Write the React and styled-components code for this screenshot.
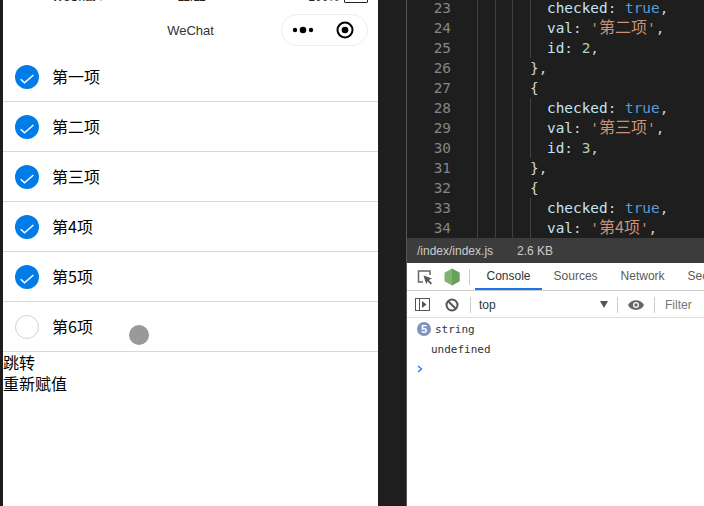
import React from 'react';
import styled, { createGlobalStyle } from 'styled-components';

const GlobalStyle = createGlobalStyle`
  html, body {
    margin: 0;
    padding: 0;
    background: #1e1e1e;
  }
`;

const CJK = '"Noto Sans CJK SC", sans-serif';
const MONO = '"DejaVu Sans Mono", "Noto Sans CJK SC", monospace';

const Page = styled.div`
  width: 704px;
  height: 506px;
  display: flex;
  overflow: hidden;
  background: #1e1e1e;
  padding-left: 3px;
  box-sizing: border-box;
`;

const Simulator = styled.div`
  position: relative;
  width: 375px;
  height: 506px;
  flex: none;
  background: #fff;
  color: #000;
  font-family: ${CJK};
  font-size: 16px;
`;

const StatusBar = styled.div`
  height: 8px;
  overflow: hidden;
  display: grid;
  grid-template-columns: 1fr auto 1fr;
  padding: 0 10px 0 12px;
  font-family: "Liberation Sans", sans-serif;
  font-size: 12px;
  line-height: 14px;
  color: #222;
`;

const StatusGroup = styled.div`
  display: flex;
  gap: 5px;
  margin-top: -10px;
  justify-content: ${(p) => (p.$end ? 'flex-end' : 'flex-start')};
`;

const Signal = styled.span`
  color: #888;
  letter-spacing: 2.2px;
`;

const Battery = styled.div`
  width: 22px;
  height: 11px;
  border: 1px solid #222;
  border-radius: 1px;
`;

const NavBar = styled.div`
  height: 44px;
  display: grid;
  grid-template-columns: 1fr auto 1fr;
  align-items: center;
  font-family: "Liberation Sans", sans-serif;
  font-size: 13px;
  color: #333;
`;

const NavTitle = styled.span`
  grid-column: 2;
`;

const Capsule = styled.div`
  grid-column: 3;
  justify-self: end;
  margin-right: 10px;
  width: 87px;
  height: 32px;
  box-sizing: border-box;
  border: 1px solid #ececec;
  border-radius: 16px;
  display: flex;
  align-items: center;
  padding-left: 10px;
`;

const Row = styled.div`
  height: 50px;
  box-sizing: border-box;
  border-bottom: 1px solid #d9d9d9;
  display: flex;
  align-items: center;
  gap: 13px;
  padding: 0 0 1px 12px;
`;

const Check = styled.span`
  width: 24px;
  height: 24px;
  box-sizing: border-box;
  flex: none;
  margin-top: 1px;
  border-radius: 50%;
  display: flex;
  align-items: center;
  justify-content: center;
  background: ${(p) => (p.$on ? '#007ce8' : '#fff')};
  border: ${(p) => (p.$on ? 'none' : '1px solid #d1d1d1')};
`;

const Plain = styled.div`
  line-height: 21px;
`;

const TouchDot = styled.div`
  position: absolute;
  left: 126px;
  top: 325px;
  width: 20px;
  height: 20px;
  border-radius: 50%;
  background: #999;
`;

const Right = styled.div`
  flex: 1;
  min-width: 0;
  margin-left: 28px;
  border-left: 1px solid #555;
  display: flex;
  flex-direction: column;
`;

const Editor = styled.div`
  height: 238px;
  flex: none;
  overflow: hidden;
  background-color: #1e1e1e;
  background-image:
    linear-gradient(#404040, #404040),
    linear-gradient(#404040, #404040),
    linear-gradient(#404040, #404040);
  background-size: 1px 100%;
  background-repeat: no-repeat;
  background-position: 70px 0, 88px 0, 105px 0;
`;

const CodeLines = styled.div`
  margin-top: -2px;
`;

const CodeLine = styled.div`
  height: 20px;
  display: flex;
  font-family: ${MONO};
  font-size: 14.4px;
  line-height: 20px;
  white-space: pre;
`;

const LineNo = styled.span`
  width: 44px;
  flex: none;
  text-align: right;
  color: #858585;
`;

const CodeText = styled.span`
  margin-left: 79px;
  padding-left: ${(p) => (p.$deep ? '17px' : '0')};
  color: #d4d4d4;
  background: ${(p) =>
    p.$deep ? 'linear-gradient(#404040, #404040) 0 0 / 1px 100% no-repeat' : 'none'};
`;

const Keyword = styled.span`
  color: #569cd6;
`;

const Str = styled.span`
  color: #ce9178;
`;

const Zh = styled.span`
  font-family: ${CJK};
  font-size: 16px;
  line-height: 1;
`;

const Num = styled.span`
  color: #b5cea8;
`;

const Prop = styled.span`
  color: #c4e4f2;
`;

const Strip = styled.div`
  height: 25px;
  flex: none;
  background: #3c3c3c;
  color: #ccc;
  display: flex;
  align-items: center;
  gap: 24px;
  padding-left: 10px;
  font-family: "Liberation Sans", sans-serif;
  font-size: 12px;
`;

const DevTools = styled.div`
  flex: 1;
  background: #fff;
  display: flex;
  flex-direction: column;
  font-family: "Liberation Sans", sans-serif;
  font-size: 12px;
  color: #5a5a5a;
`;

const TabBar = styled.div`
  height: 28px;
  flex: none;
  box-sizing: border-box;
  border-bottom: 1px solid #ccc;
  display: flex;
  align-items: center;
  padding-left: 10px;
  overflow: hidden;

  svg {
    flex: none;
  }
`;

const Divider = styled.span`
  width: 1px;
  height: 16px;
  flex: none;
  background: #ccc;
  margin: ${(p) => p.$margin};
`;

const Tab = styled.span`
  height: 27px;
  box-sizing: border-box;
  padding: 0 11.5px;
  display: flex;
  align-items: center;
  flex: none;
  color: ${(p) => (p.$active ? '#333' : '#5a5a5a')};
  border-bottom: 2px solid ${(p) => (p.$active ? '#1a73e8' : 'transparent')};
`;

const FilterBar = styled.div`
  height: 27px;
  flex: none;
  box-sizing: border-box;
  border-bottom: 1px solid #ddd;
  display: flex;
  align-items: center;
  padding: 1px 0 0 8px;

  svg {
    flex: none;
  }
`;

const TopSelect = styled.span`
  width: 129px;
  flex: none;
  margin-left: 8px;
  display: flex;
  justify-content: space-between;
  align-items: center;
  color: #333;
`;

const FilterLabel = styled.span`
  margin-left: 10px;
  color: #777;
`;

const ConsoleBody = styled.div`
  padding: 1px 0 0 10px;
  font-family: "DejaVu Sans Mono", monospace;
  font-size: 11px;
  color: #333;
`;

const LogLine = styled.div`
  height: 20px;
  display: flex;
  align-items: center;
  gap: 4px;
  padding-left: ${(p) => (p.$indent ? '14px' : '0')};
`;

const Badge = styled.span`
  width: 14px;
  height: 14px;
  border-radius: 50%;
  background: #7f93c0;
  color: #fff;
  font-family: "Liberation Sans", sans-serif;
  font-weight: bold;
  font-size: 11px;
  display: flex;
  align-items: center;
  justify-content: center;
`;

const items = [
  { id: 1, val: '第一项', checked: true },
  { id: 2, val: '第二项', checked: true },
  { id: 3, val: '第三项', checked: true },
  { id: 4, val: '第4项', checked: true },
  { id: 5, val: '第5项', checked: true },
  { id: 6, val: '第6项', checked: false },
];

const Checked = () => (
  <>
    <Prop>checked</Prop>: <Keyword>true</Keyword>,
  </>
);
const Val = ({ text }) => (
  <>
    <Prop>val</Prop>: <Str>'<Zh>{text}</Zh>'</Str>,
  </>
);
const Id = ({ n }) => (
  <>
    <Prop>id</Prop>: <Num>{n}</Num>,
  </>
);

const code = [
  [23, <Checked />, true],
  [24, <Val text="第二项" />, true],
  [25, <Id n={2} />, true],
  [26, '},', false],
  [27, '{', false],
  [28, <Checked />, true],
  [29, <Val text="第三项" />, true],
  [30, <Id n={3} />, true],
  [31, '},', false],
  [32, '{', false],
  [33, <Checked />, true],
  [34, <Val text="第4项" />, true],
];

const Tick = () => (
  <svg width="14" height="10" viewBox="0 0 14 10" style={{ marginTop: 5 }} fill="none">
    <path d="M0.7 5.2 L4.6 8.8 L13.4 1" stroke="#fff" strokeWidth="1.5" />
  </svg>
);

const MenuDots = () => (
  <svg width="24" height="10" viewBox="0 0 24 10">
    <circle cx="3" cy="5" r="2.2" fill="#000" />
    <circle cx="11" cy="5" r="3.3" fill="#000" />
    <circle cx="19" cy="5" r="2.2" fill="#000" />
  </svg>
);

const CloseRing = () => (
  <svg width="18" height="18" viewBox="0 0 18 18" style={{ marginLeft: 20 }} fill="none">
    <circle cx="9" cy="9" r="7.5" stroke="#000" strokeWidth="2" />
    <circle cx="9" cy="9" r="3.3" fill="#000" />
  </svg>
);

const InspectIcon = () => (
  <svg width="16" height="16" viewBox="0 0 16 16" fill="none">
    <path d="M6 13 H1.5 V2 H13 V6" stroke="#666" strokeWidth="1.5" />
    <path d="M6.5 6.5 L15 9.5 L11.8 11 L15 14.2 L13.8 15.4 L10.6 12.2 L9.3 15.2 Z" fill="#555" />
  </svg>
);

const NodeHex = () => (
  <svg width="16" height="18" viewBox="0 0 16 18" style={{ marginLeft: 11 }}>
    <path d="M8 0.5 L15.5 4.7 V13.3 L8 17.5 L0.5 13.3 V4.7 Z" fill="#7fb56f" />
    <path d="M8 0.5 L15.5 4.7 V13.3 L8 17.5 Z" fill="#6a9f5e" />
  </svg>
);

const SidebarIcon = () => (
  <svg width="15" height="13" viewBox="0 0 15 13" fill="none">
    <rect x="0.5" y="0.5" width="14" height="12" stroke="#555" />
    <path d="M4.5 0.5 V12.5" stroke="#555" />
    <path d="M7 3 L11.5 6.5 L7 10 Z" fill="#555" />
  </svg>
);

const BlockIcon = () => (
  <svg width="14" height="14" viewBox="0 0 14 14" style={{ marginLeft: 15 }} fill="none">
    <circle cx="7" cy="7" r="5.5" stroke="#555" strokeWidth="2" />
    <path d="M3 3 L11 11" stroke="#555" strokeWidth="2" />
  </svg>
);

const Caret = () => (
  <svg width="8" height="7" viewBox="0 0 8 7">
    <path d="M0 0 H8 L4 7 Z" fill="#555" />
  </svg>
);

const EyeIcon = () => (
  <svg width="16" height="12" viewBox="0 0 16 12">
    <path d="M0 6 C3 -0.5 13 -0.5 16 6 C13 12.5 3 12.5 0 6 Z" fill="#666" />
    <circle cx="8" cy="6" r="3" fill="#fff" />
    <circle cx="8" cy="6" r="1.7" fill="#666" />
  </svg>
);

const Prompt = () => (
  <svg width="6" height="8" viewBox="0 0 6 8" fill="none">
    <path d="M1 1 L4.5 4 L1 7" stroke="#2a7de1" strokeWidth="1.4" />
  </svg>
);

const App = () => (
  <Page>
    <GlobalStyle />
    <Simulator>
      <StatusBar>
        <StatusGroup>
          <Signal>•••••</Signal>
          <span>WeChat ▾</span>
        </StatusGroup>
        <StatusGroup>
          <span>11:11</span>
        </StatusGroup>
        <StatusGroup $end>
          <span>100%</span>
          <Battery />
        </StatusGroup>
      </StatusBar>
      <NavBar>
        <NavTitle>WeChat</NavTitle>
        <Capsule>
          <MenuDots />
          <CloseRing />
        </Capsule>
      </NavBar>
      {items.map((item) => (
        <Row key={item.id}>
          <Check $on={item.checked}>{item.checked && <Tick />}</Check>
          <span>{item.val}</span>
        </Row>
      ))}
      <Plain>跳转</Plain>
      <Plain>重新赋值</Plain>
      <TouchDot />
    </Simulator>
    <Right>
      <Editor>
        <CodeLines>
          {code.map(([no, content, deep]) => (
            <CodeLine key={no}>
              <LineNo>{no}</LineNo>
              <CodeText $deep={deep}>{content}</CodeText>
            </CodeLine>
          ))}
        </CodeLines>
      </Editor>
      <Strip>
        <span>/index/index.js</span>
        <span>2.6 KB</span>
      </Strip>
      <DevTools>
        <TabBar>
          <InspectIcon />
          <NodeHex />
          <Divider $margin="0 5px 0 9px" />
          <Tab $active>Console</Tab>
          <Tab>Sources</Tab>
          <Tab>Network</Tab>
          <Tab>Security</Tab>
        </TabBar>
        <FilterBar>
          <SidebarIcon />
          <BlockIcon />
          <Divider $margin="0 0 0 11px" />
          <TopSelect>
            top
            <Caret />
          </TopSelect>
          <Divider $margin="0 10px 0 9px" />
          <EyeIcon />
          <Divider $margin="0 0 0 10px" />
          <FilterLabel>Filter</FilterLabel>
        </FilterBar>
        <ConsoleBody>
          <LogLine>
            <Badge>5</Badge>
            string
          </LogLine>
          <LogLine $indent>undefined</LogLine>
          <LogLine>
            <Prompt />
          </LogLine>
        </ConsoleBody>
      </DevTools>
    </Right>
  </Page>
);

export default App;
